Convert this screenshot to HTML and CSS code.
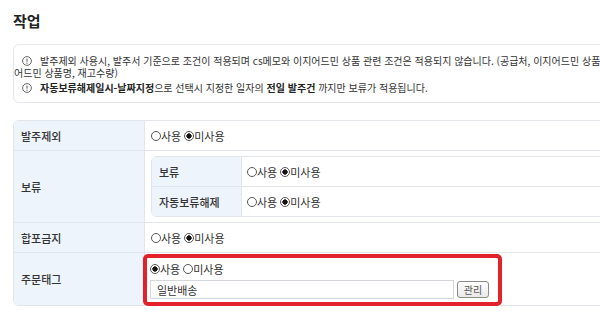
FILE: index.html
```html
<!DOCTYPE html>
<html lang="ko">
<head>
<meta charset="utf-8">
<title>작업</title>
<link rel="stylesheet" href="styles.css">
</head>
<body>
<h1 class="title">작업</h1>

<div class="notice">
  <p><svg class="ico" viewBox="0 0 10 10"><circle cx="5" cy="5" r="4.4" fill="none" stroke="#555" stroke-width="0.9"/><line x1="5" y1="2.6" x2="5" y2="5.7" stroke="#555" stroke-width="1"/><circle cx="5" cy="7.2" r="0.6" fill="#555"/></svg>발주제외 사용시, 발주서 기준으로 조건이 적용되며 cs메모와 이지어드민 상품 관련 조건은 적용되지 않습니다. (공급처, 이지어드민 상품코드, 이지<br>어드민 상품명, 재고수량)</p>
  <p><svg class="ico" viewBox="0 0 10 10"><circle cx="5" cy="5" r="4.4" fill="none" stroke="#555" stroke-width="0.9"/><line x1="5" y1="2.6" x2="5" y2="5.7" stroke="#555" stroke-width="1"/><circle cx="5" cy="7.2" r="0.6" fill="#555"/></svg><b>자동보류해제일시-날짜지정</b>으로 선택시 지정한 일자의 <b>전일 발주건</b> 까지만 보류가 적용됩니다.</p>
</div>

<div class="form">
  <div class="th row-s first">발주제외</div>
  <div class="td row-s">
    <label class="radio"><input type="radio" name="r1">사용</label>
    <label class="radio"><input type="radio" name="r1" checked>미사용</label>
  </div>

  <div class="th">보류</div>
  <div class="td nest">
    <div class="inner">
      <div class="ith">보류</div>
      <div class="itd">
        <label class="radio"><input type="radio" name="r2">사용</label>
        <label class="radio"><input type="radio" name="r2" checked>미사용</label>
      </div>
      <div class="ith last">자동보류해제</div>
      <div class="itd last">
        <label class="radio"><input type="radio" name="r3">사용</label>
        <label class="radio"><input type="radio" name="r3" checked>미사용</label>
      </div>
    </div>
  </div>

  <div class="th row-s">합포금지</div>
  <div class="td row-s">
    <label class="radio"><input type="radio" name="r4">사용</label>
    <label class="radio"><input type="radio" name="r4" checked>미사용</label>
  </div>

  <div class="th last bottom">주문태그</div>
  <div class="td last tag">
    <div class="radios">
      <label class="radio"><input type="radio" name="r5" checked>사용</label>
      <label class="radio"><input type="radio" name="r5">미사용</label>
    </div>
    <div class="tag-input">
      <input class="text" type="text" value="일반배송">
      <button class="btn" type="button">관리</button>
    </div>
    <div class="highlight"></div>
  </div>
</div>
</body>
</html>
```

FILE: styles.css
```css
* { box-sizing: border-box; }
html, body {
  margin: 0;
  overflow: hidden;
  background: #fff;
}
body {
  padding: 0 13px;
  font-family: "Noto Sans CJK KR", "Noto Sans", sans-serif;
  font-size: 11px;
  color: #333;
}
.title {
  margin: 0;
  padding-top: 10px;
  font-size: 15px;
  line-height: 22px;
  font-weight: 600;
  color: #222;
}
.notice {
  margin-top: 12px;
  width: 690px;
  border: 1px solid #e4e7eb;
  border-radius: 6px;
  padding: 10px 0 8px;
  font-size: 10px;
}
.notice p {
  margin: 0;
  line-height: 12px;
  white-space: nowrap;
}
.notice p + p { margin-top: 3px; }
.notice b { font-weight: 700; color: #222; }
.ico {
  display: inline-block;
  width: 10px;
  height: 10px;
  margin: 0 8px;
  vertical-align: -1px;
}
.form {
  margin-top: 17px;
  width: 700px;
  border: 1px solid #e2e6ea;
  border-radius: 6px;
  display: grid;
  grid-template-columns: 131px 1fr;
}
.th {
  background: #eef4fc;
  border-right: 1px solid #e2e6ea;
  border-bottom: 1px solid #e2e6ea;
  padding-left: 7px;
  display: flex;
  align-items: center;
  font-weight: 500;
  color: #333;
}
.th.first { border-top-left-radius: 5px; }
.th.bottom { border-bottom-left-radius: 5px; }
.td {
  border-bottom: 1px solid #e2e6ea;
  padding: 0 6px;
  display: flex;
  align-items: center;
}
.row-s { height: 30px; }
.last { border-bottom: none; }
.nest { padding: 5px 6px; }
.inner {
  width: 100%;
  border: 1px solid #e2e6ea;
  border-radius: 6px;
  display: grid;
  grid-template-columns: 90px 1fr;
}
.ith {
  background: #eef4fc;
  border-right: 1px solid #e2e6ea;
  border-bottom: 1px solid #e2e6ea;
  height: 30px;
  padding-left: 7px;
  display: flex;
  align-items: center;
  font-weight: 500;
}
.ith:first-child { border-top-left-radius: 5px; }
.ith.last { border-bottom: none; height: 29px; border-bottom-left-radius: 5px; }
.itd {
  border-bottom: 1px solid #e2e6ea;
  height: 30px;
  padding-left: 5px;
  display: flex;
  align-items: center;
}
.itd.last { border-bottom: none; height: 29px; }
.radio {
  display: inline-flex;
  align-items: center;
  margin-right: 3px;
  color: #333;
}
.radio input {
  appearance: none;
  -webkit-appearance: none;
  width: 10px;
  height: 10px;
  margin: 0;
  border: 1px solid #555;
  border-radius: 50%;
  background: #fff;
}
.radio input:checked {
  background: radial-gradient(circle, #111 0 2.4px, #fff 2.9px);
}
.tag {
  position: relative;
  display: block;
  height: 52px;
  padding: 8px 5px 0;
}
.radios {
  height: 15px;
  display: flex;
  align-items: center;
}
.tag-input {
  margin-top: 4px;
  display: flex;
  align-items: center;
}
.text {
  width: 304px;
  height: 19px;
  border: 1px solid #d3d7dc;
  padding: 0 6px;
  font: inherit;
  font-size: 11px;
  color: #333;
  outline: none;
}
.btn {
  margin-left: 3px;
  width: 32px;
  height: 17px;
  padding: 0;
  border: 1px solid #8a8a8a;
  border-radius: 3px;
  background: linear-gradient(#ffffff, #e9e9e9);
  font: inherit;
  font-size: 10px;
  color: #555;
}
.highlight {
  position: absolute;
  left: -2px;
  top: 1px;
  width: 359px;
  height: 52px;
  border: 4px solid #e4202a;
  border-radius: 5px;
  pointer-events: none;
}
```
